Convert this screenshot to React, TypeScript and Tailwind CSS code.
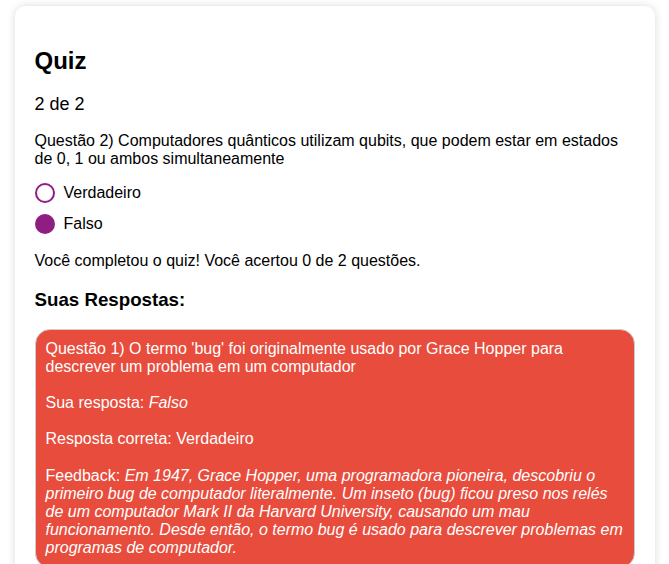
import React from "react";

export default function App() {
  const font = { fontFamily: '"Liberation Sans", Arial, sans-serif' };
  return (
    <div className="min-h-[564px] bg-white pt-[6px]" style={font}>
      <div className="mx-auto w-[640px] rounded-[10px] bg-white p-[20px] pt-[21px] text-black shadow-[0_0_8px_rgba(0,0,0,0.15)]">
        <h2 className="mt-[20px] text-[24px] font-bold leading-[28px]">Quiz</h2>
        <p className="mt-[19px] text-[18px] leading-[21px]">2 de 2</p>
        <p className="mt-[17px] text-[16px] leading-[18px]">
          Questão 2) Computadores quânticos utilizam qubits, que podem estar em estados de 0, 1 ou ambos
          simultaneamente
        </p>
        <div className="mt-[15px] flex flex-col gap-[11px]">
          <label className="flex h-[20px] items-center gap-[9px] text-[16px]">
            <span className="box-border h-[20px] w-[20px] rounded-full border-2 border-[#8f1d82] bg-white" />
            <span>Verdadeiro</span>
          </label>
          <label className="flex h-[20px] items-center gap-[9px] text-[16px]">
            <span className="box-border h-[20px] w-[20px] rounded-full bg-[#8f1d82]" />
            <span>Falso</span>
          </label>
        </div>
        <p className="mt-[18px] text-[16px] leading-[18px]">
          Você completou o quiz! Você acertou 0 de 2 questões.
        </p>
        <h3 className="mt-[19px] text-[18.72px] font-bold leading-[22px]">Suas Respostas:</h3>
        <div className="mt-[18px] rounded-[15px] border border-[#cccccc] bg-[#e74c3c] px-[10px] py-[10px] text-[16px] leading-[18px] text-white">
          <p>
            Questão 1) O termo 'bug' foi originalmente usado por Grace Hopper para descrever um problema em um
            computador
          </p>
          <p className="mt-[18px]">
            Sua resposta: <em>Falso</em>
          </p>
          <p className="mt-[18px]">Resposta correta: Verdadeiro</p>
          <p className="mt-[19px]">
            Feedback:{" "}
            <em>
              Em 1947, Grace Hopper, uma programadora pioneira, descobriu o primeiro bug de computador
              literalmente. Um inseto (bug) ficou preso nos relés de um computador Mark II da Harvard
              University, causando um mau funcionamento. Desde então, o termo bug é usado para descrever
              problemas em programas de computador.
            </em>
          </p>
        </div>
      </div>
    </div>
  );
}
